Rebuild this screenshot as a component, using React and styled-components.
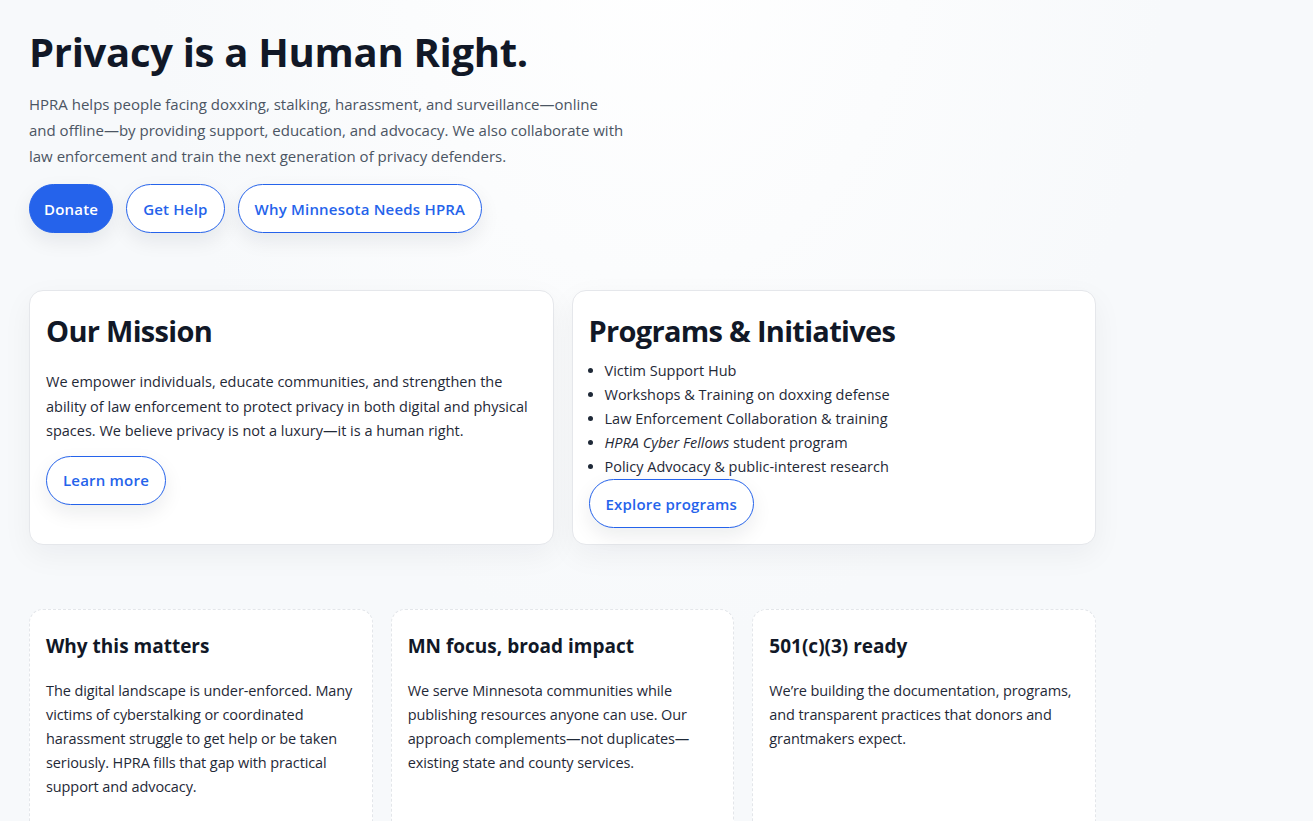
import React from 'react'
import styled, { createGlobalStyle } from 'styled-components'

const GlobalStyle = createGlobalStyle`
  * { box-sizing: border-box; }
  body {
    margin: 0;
    font-family: "Open Sans", "Noto Sans", sans-serif;
    color: #111827;
    background: radial-gradient(ellipse at 50% -10%, #ffffff 0%, #f7f9fb 55%) #f7f9fb;
    min-height: 100vh;
  }
`

const Page = styled.main`
  width: 1125px;
  padding: 24px 29px 0;
`

const Hero = styled.section`
  max-width: 680px;
`

const Title = styled.h1`
  margin: 0;
  font-size: 40px;
  line-height: 56px;
  font-weight: 700;
  letter-spacing: -0.3px;
  color: #111827;
`

const Lead = styled.p`
  margin: 11px 0 0;
  font-size: 15px;
  line-height: 26px;
  color: #4b5563;
`

const Actions = styled.div`
  display: flex;
  gap: 13px;
  margin-top: 15px;
`

const Pill = styled.a`
  display: inline-flex;
  align-items: center;
  justify-content: center;
  height: 49px;
  padding: 0 ${p => (p.$primary ? '14px' : '16px')};
  border-radius: 999px;
  border: 1px solid #2563eb;
  background: ${p => (p.$primary ? '#2563eb' : '#ffffff')};
  color: ${p => (p.$primary ? '#ffffff' : '#2563eb')};
  font-size: 15px;
  font-weight: 600;
  letter-spacing: 0.2px;
  text-decoration: none;
  box-shadow: 0 8px 20px rgba(15, 23, 42, 0.08);
  white-space: nowrap;
`

const TopGrid = styled.div`
  display: grid;
  grid-template-columns: 1fr 1fr;
  gap: 18px;
  margin-top: 57px;
`

const Card = styled.article`
  display: flex;
  flex-direction: column;
  align-items: flex-start;
  background: #ffffff;
  border: 1px solid #e5e7eb;
  border-radius: 14px;
  padding: 16px;
  box-shadow: 0 10px 30px rgba(15, 23, 42, 0.05);
`

const CardTitle = styled.h2`
  margin: 0;
  font-size: 29px;
  line-height: 48px;
  font-weight: 700;
  letter-spacing: -0.7px;
  color: #111827;
`

const CardText = styled.p`
  margin: 15px 0 0;
  font-size: 14.5px;
  line-height: 24.5px;
  color: #1f2937;
`

const List = styled.ul`
  margin: 4px 0 0;
  padding-left: 16px;
  font-size: 14.5px;
  line-height: 24px;
  color: #1f2937;
`

const CardButton = styled(Pill)`
  margin-top: ${p => p.$gap || '12px'};
`

const BottomGrid = styled.div`
  display: grid;
  grid-template-columns: repeat(3, 1fr);
  gap: 18px;
  margin-top: 64px;
`

const Note = styled.article`
  background: #ffffff;
  border: 1px dashed #e3e6ea;
  border-radius: 14px;
  padding: 20px 16px 40px;
  min-height: 240px;
`

const NoteTitle = styled.h3`
  margin: 0;
  font-size: 19px;
  line-height: 32px;
  font-weight: 700;
  color: #111827;
`

const NoteText = styled.p`
  margin: 17px 0 0;
  font-size: 14.5px;
  line-height: 24px;
  letter-spacing: -0.1px;
  color: #1f2937;
`

const notes = [
  {
    title: 'Why this matters',
    text: 'The digital landscape is under-enforced. Many victims of cyberstalking or coordinated harassment struggle to get help or be taken seriously. HPRA fills that gap with practical support and advocacy.',
  },
  {
    title: 'MN focus, broad impact',
    text: 'We serve Minnesota communities while publishing resources anyone can use. Our approach complements\u2014not duplicates\u2014 existing state and county services.',
  },
  {
    title: '501(c)(3) ready',
    text: 'We\u2019re building the documentation, programs, and transparent practices that donors and grantmakers expect.',
  },
]

export default function App() {
  return (
    <>
      <GlobalStyle />
      <Page>
        <Hero>
          <Title>Privacy is a Human Right.</Title>
          <Lead>
            HPRA helps people facing doxxing, stalking, harassment, and surveillance—online
            <br />
            and offline—by providing support, education, and advocacy. We also collaborate with
            <br />
            law enforcement and train the next generation of privacy defenders.
          </Lead>
          <Actions>
            <Pill $primary href="#">Donate</Pill>
            <Pill href="#">Get Help</Pill>
            <Pill href="#">Why Minnesota Needs HPRA</Pill>
          </Actions>
        </Hero>

        <TopGrid>
          <Card>
            <CardTitle>Our Mission</CardTitle>
            <CardText>
              We empower individuals, educate communities, and strengthen the ability of law
              enforcement to protect privacy in both digital and physical spaces. We believe
              privacy is not a luxury—it is a human right.
            </CardText>
            <CardButton href="#">Learn more</CardButton>
          </Card>
          <Card>
            <CardTitle>Programs &amp; Initiatives</CardTitle>
            <List>
              <li>Victim Support Hub</li>
              <li>Workshops &amp; Training on doxxing defense</li>
              <li>Law Enforcement Collaboration &amp; training</li>
              <li><em>HPRA Cyber Fellows</em> student program</li>
              <li>Policy Advocacy &amp; public-interest research</li>
            </List>
            <CardButton href="#" $gap="0px">Explore programs</CardButton>
          </Card>
        </TopGrid>

        <BottomGrid>
          {notes.map(n => (
            <Note key={n.title}>
              <NoteTitle>{n.title}</NoteTitle>
              <NoteText>{n.text}</NoteText>
            </Note>
          ))}
        </BottomGrid>
      </Page>
    </>
  )
}
